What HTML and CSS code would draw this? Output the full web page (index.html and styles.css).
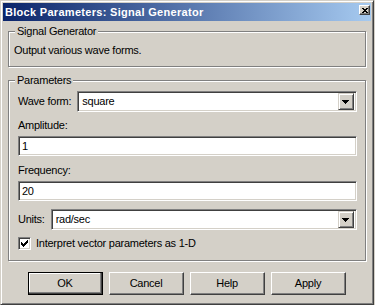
FILE: index.html
```html
<!DOCTYPE html>
<html>
<head>
<meta charset="utf-8">
<link rel="stylesheet" href="styles.css">
</head>
<body>
<div class="window">
  <div class="titlebar">
    <span class="title">Block Parameters: Signal Generator</span>
    <span class="close"><svg width="6" height="5" viewBox="0 0 6 5" shape-rendering="crispEdges"><path d="M0 0h2v1h-2z M4 0h2v1h-2z M1 1h4v1h-4z M2 2h2v1h-2z M1 3h4v1h-4z M0 4h2v1h-2z M4 4h2v1h-2z" fill="#000"/></svg></span>
  </div>
  <fieldset class="group group-desc">
    <legend>Signal Generator</legend>
    <p class="desc">Output various wave forms.</p>
  </fieldset>
  <fieldset class="group group-params">
    <legend>Parameters</legend>
    <div class="row">
      <span class="label">Wave form:</span>
      <div class="combo"><span class="combo-value">square</span><span class="combo-btn"><svg width="7" height="4" viewBox="0 0 7 4" shape-rendering="crispEdges"><path d="M0 0h7v1h-7z M1 1h5v1h-5z M2 2h3v1h-3z M3 3h1v1h-1z" fill="#000"/></svg></span></div>
    </div>
    <div class="field-label first">Amplitude:</div>
    <div class="edit">1</div>
    <div class="field-label">Frequency:</div>
    <div class="edit">20</div>
    <div class="row units">
      <span class="label">Units:</span>
      <div class="combo"><span class="combo-value">rad/sec</span><span class="combo-btn"><svg width="7" height="4" viewBox="0 0 7 4" shape-rendering="crispEdges"><path d="M0 0h7v1h-7z M1 1h5v1h-5z M2 2h3v1h-3z M3 3h1v1h-1z" fill="#000"/></svg></span></div>
    </div>
    <div class="check-row">
      <span class="checkbox"><svg width="7" height="7" viewBox="0 0 7 7" shape-rendering="crispEdges"><path d="M0 2h1v3h-1z M1 3h1v3h-1z M2 4h1v3h-1z M3 3h1v3h-1z M4 2h1v3h-1z M5 1h1v3h-1z M6 0h1v3h-1z" fill="#000"/></svg></span>
      <span class="check-text">Interpret vector parameters as 1-D</span>
    </div>
  </fieldset>
  <div class="buttons">
    <button class="btn default">OK</button>
    <button class="btn">Cancel</button>
    <button class="btn">Help</button>
    <button class="btn">Apply</button>
  </div>
</div>
</body>
</html>
```

FILE: styles.css
```css
* { box-sizing: border-box; }

html, body {
  margin: 0;
  padding: 0;
  background: #d4d0c8;
}

body {
  font-family: "Liberation Sans", Arial, sans-serif;
  font-size: 11px;
  line-height: 13px;
  letter-spacing: -0.25px;
  color: #000;
}

.window {
  width: 374px;
  height: 305px;
  padding: 2px;
  background: #d4d0c8;
  border: 1px solid;
  border-color: #d4d0c8 #404040 #404040 #d4d0c8;
  box-shadow: inset 1px 1px 0 #fff, inset -1px -1px 0 #808080;
  display: flex;
  flex-direction: column;
}

.titlebar {
  height: 18px;
  display: flex;
  align-items: flex-start;
  justify-content: space-between;
  background: linear-gradient(to right, #0a246a, #a6caf0);
  padding: 0 1px 0 2px;
}

.title {
  color: #fff;
  font-weight: bold;
  letter-spacing: 0.3px;
  line-height: 18px;
}

.close {
  margin-top: 2px;
  width: 11px;
  height: 10px;
  background: #d4d0c8;
  border: 1px solid;
  border-color: #fff #404040 #404040 #fff;
  box-shadow: inset -1px -1px 0 #808080;
  display: flex;
  align-items: center;
  justify-content: center;
}

.close svg { display: block; }

.group {
  margin: 0 5px;
  border: 1px solid #808080;
  box-shadow: 1px 1px 0 #fff, inset 1px 1px 0 #fff;
  min-width: 0;
}

.group legend {
  padding: 0 2px;
  line-height: 13px;
  background: #d4d0c8;
}

.group-desc {
  margin-top: 4px;
  padding: 6px 8px 9px 5px;
}

.group-desc legend { margin-left: 1px; }

.desc { margin: 0; }

.group-params {
  margin-top: 7px;
  padding: 4px 8px 10px 9px;
}

.group-params legend { margin-left: -3px; }

.row {
  display: flex;
  align-items: center;
  gap: 6px;
  height: 21px;
}

.row.units { margin-top: 8px; }

.combo {
  flex: 1;
  height: 21px;
  display: flex;
  align-items: center;
  background: #fff;
  border: 1px solid;
  border-color: #808080 #fff #fff #808080;
  box-shadow: inset 1px 1px 0 #404040, inset -1px -1px 0 #d4d0c8;
  padding: 2px 2px 2px 4px;
}

.combo-value { flex: 1; }

.combo-btn {
  width: 16px;
  height: 17px;
  background: #d4d0c8;
  border: 1px solid;
  border-color: #d4d0c8 #404040 #404040 #d4d0c8;
  box-shadow: inset 1px 1px 0 #fff, inset -1px -1px 0 #808080;
  display: flex;
  align-items: center;
  justify-content: center;
}

.combo-btn svg { display: block; margin-left: -1px; }

.field-label { margin-top: 8px; }
.field-label.first { margin-top: 7px; }

.edit {
  margin-top: 4px;
  height: 20px;
  background: #fff;
  border: 1px solid;
  border-color: #808080 #fff #fff #808080;
  box-shadow: inset 1px 1px 0 #404040, inset -1px -1px 0 #d4d0c8;
  padding: 2px 3px 0 3px;
  line-height: 15px;
}

.check-row {
  margin-top: 7px;
  display: flex;
  align-items: center;
  gap: 5px;
  height: 13px;
}

.checkbox {
  width: 13px;
  height: 13px;
  background: #fff;
  border: 1px solid;
  border-color: #808080 #fff #fff #808080;
  box-shadow: inset 1px 1px 0 #404040, inset -1px -1px 0 #d4d0c8;
  display: flex;
  align-items: center;
  justify-content: center;
}

.checkbox svg { display: block; }

.buttons {
  margin-top: 11px;
  display: flex;
  justify-content: center;
  gap: 6px;
  padding-right: 1px;
}

.btn {
  width: 75px;
  height: 23px;
  margin: 0;
  padding: 0;
  font: inherit;
  letter-spacing: inherit;
  color: #000;
  background: #d4d0c8;
  border: 1px solid;
  border-color: #fff #404040 #404040 #fff;
  box-shadow: inset -1px -1px 0 #808080;
}

.btn.default {
  border: 1px solid #000;
  box-shadow: inset -1px -1px 0 #404040, inset -2px -2px 0 #808080, inset 1px 1px 0 #fff;
}
```
